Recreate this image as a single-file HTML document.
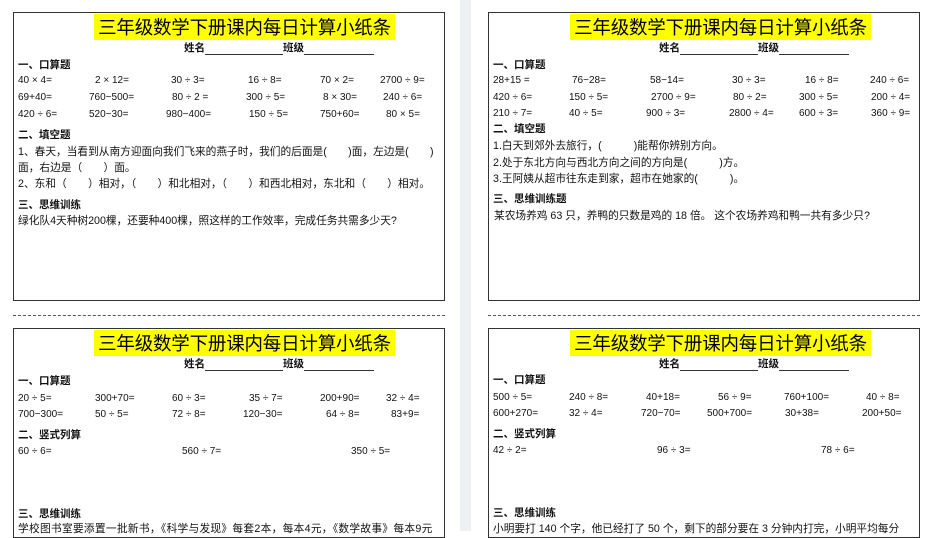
<!DOCTYPE html>
<html><head><meta charset="utf-8"><style>
*{margin:0;padding:0;box-sizing:border-box}
body{width:929px;height:531px;overflow:hidden;background:#fff;position:relative;font-family:"Liberation Sans","Noto Sans CJK SC",sans-serif;color:#111;font-size:10px}
.gap{position:absolute;left:460px;top:0;width:11px;height:531px;background:#eef0f4}
.box{position:absolute;border:1.5px solid #333;background:#fff}
.dash{position:absolute;height:0;border-top:1px dashed #555}
.t{position:absolute;white-space:nowrap;line-height:13px}
.c{font-size:10.7px}
.title{position:absolute;background:#ffff00;font-size:18.5px;line-height:26px;height:26px;width:301px;text-align:center;white-space:nowrap;font-family:"Noto Sans CJK SC",sans-serif;color:#000;letter-spacing:-0.2px}
.b{font-weight:bold;font-size:10.5px}
.u{display:inline-block;width:78px;border-bottom:1px solid #333;height:11px;vertical-align:bottom}
</style></head><body>
<div class="gap"></div>
<div class="box" style="left:13px;top:12px;width:432px;height:289px"></div>
<div class="box" style="left:488px;top:12px;width:432px;height:289px"></div>
<div class="box" style="left:13px;top:328px;width:432px;height:210px"></div>
<div class="box" style="left:488px;top:328px;width:432px;height:210px"></div>
<div class="dash" style="left:13px;top:315px;width:432px"></div>
<div class="dash" style="left:488px;top:315px;width:432px"></div>

<!-- TL -->
<div class="title" style="left:94px;top:14px">三年级数学下册课内每日计算小纸条</div>
<div class="t b" style="left:184px;top:42px">姓名<span class="u"></span>班级<span class="u" style="width:70px"></span></div>
<div class="t b" style="left:18px;top:59px">一、口算题</div>
<div class="t" style="left:18px;top:74px">40 × 4=</div><div class="t" style="left:95px;top:74px">2 × 12=</div><div class="t" style="left:171px;top:74px">30 ÷ 3=</div><div class="t" style="left:248px;top:74px">16 ÷ 8=</div><div class="t" style="left:320px;top:74px">70 × 2=</div><div class="t" style="left:380px;top:74px">2700 ÷ 9=</div>
<div class="t" style="left:18px;top:91px">69+40=</div><div class="t" style="left:89px;top:91px">760−500=</div><div class="t" style="left:172px;top:91px">80 ÷ 2 =</div><div class="t" style="left:246px;top:91px">300 ÷ 5=</div><div class="t" style="left:323px;top:91px">8 × 30=</div><div class="t" style="left:383px;top:91px">240 ÷ 6=</div>
<div class="t" style="left:18px;top:108px">420 ÷ 6=</div><div class="t" style="left:89px;top:108px">520−30=</div><div class="t" style="left:166px;top:108px">980−400=</div><div class="t" style="left:249px;top:108px">150 ÷ 5=</div><div class="t" style="left:320px;top:108px">750+60=</div><div class="t" style="left:386px;top:108px">80 × 5=</div>
<div class="t b" style="left:18px;top:129px">二、填空题</div>
<div class="t c" style="left:18px;top:146px">1、春天，当看到从南方迎面向我们飞来的燕子时，我们的后面是(　　)面，左边是(　　)</div>
<div class="t c" style="left:18px;top:162px">面，右边是（　　）面。</div>
<div class="t c" style="left:18px;top:178px">2、东和（　　）相对，（　　）和北相对，（　　）和西北相对，东北和（　　）相对。</div>
<div class="t b" style="left:18px;top:199px">三、思维训练</div>
<div class="t c" style="left:18px;top:215px">绿化队4天种树200棵，还要种400棵，照这样的工作效率，完成任务共需多少天?</div>

<!-- TR -->
<div class="title" style="left:570px;top:14px">三年级数学下册课内每日计算小纸条</div>
<div class="t b" style="left:659px;top:42px">姓名<span class="u"></span>班级<span class="u" style="width:70px"></span></div>
<div class="t b" style="left:493px;top:59px">一、口算题</div>
<div class="t" style="left:493px;top:74px">28+15 =</div><div class="t" style="left:572px;top:74px">76−28=</div><div class="t" style="left:650px;top:74px">58−14=</div><div class="t" style="left:732px;top:74px">30 ÷ 3=</div><div class="t" style="left:805px;top:74px">16 ÷ 8=</div><div class="t" style="left:870px;top:74px">240 ÷ 6=</div>
<div class="t" style="left:493px;top:91px">420 ÷ 6=</div><div class="t" style="left:569px;top:91px">150 ÷ 5=</div><div class="t" style="left:651px;top:91px">2700 ÷ 9=</div><div class="t" style="left:733px;top:91px">80 ÷ 2=</div><div class="t" style="left:799px;top:91px">300 ÷ 5=</div><div class="t" style="left:871px;top:91px">200 ÷ 4=</div>
<div class="t" style="left:493px;top:107px">210 ÷ 7=</div><div class="t" style="left:569px;top:107px">40 ÷ 5=</div><div class="t" style="left:646px;top:107px">900 ÷ 3=</div><div class="t" style="left:729px;top:107px">2800 ÷ 4=</div><div class="t" style="left:799px;top:107px">600 ÷ 3=</div><div class="t" style="left:871px;top:107px">360 ÷ 9=</div>
<div class="t b" style="left:493px;top:123px">二、填空题</div>
<div class="t c" style="left:493px;top:140px">1.白天到郊外去旅行，(　　　)能帮你辨别方向。</div>
<div class="t c" style="left:493px;top:157px">2.处于东北方向与西北方向之间的方向是(　　　)方。</div>
<div class="t c" style="left:493px;top:173px">3.王阿姨从超市往东走到家，超市在她家的(　　　)。</div>
<div class="t b" style="left:493px;top:193px">三、思维训练题</div>
<div class="t c" style="left:494px;top:210px">某农场养鸡 63 只，养鸭的只数是鸡的 18 倍。 这个农场养鸡和鸭一共有多少只?</div>

<!-- BL -->
<div class="title" style="left:94px;top:330px">三年级数学下册课内每日计算小纸条</div>
<div class="t b" style="left:184px;top:358px">姓名<span class="u"></span>班级<span class="u" style="width:70px"></span></div>
<div class="t b" style="left:18px;top:375px">一、口算题</div>
<div class="t" style="left:18px;top:392px">20 ÷ 5=</div><div class="t" style="left:95px;top:392px">300+70=</div><div class="t" style="left:172px;top:392px">60 ÷ 3=</div><div class="t" style="left:249px;top:392px">35 ÷ 7=</div><div class="t" style="left:320px;top:392px">200+90=</div><div class="t" style="left:386px;top:392px">32 ÷ 4=</div>
<div class="t" style="left:18px;top:408px">700−300=</div><div class="t" style="left:95px;top:408px">50 ÷ 5=</div><div class="t" style="left:172px;top:408px">72 ÷ 8=</div><div class="t" style="left:243px;top:408px">120−30=</div><div class="t" style="left:326px;top:408px">64 ÷ 8=</div><div class="t" style="left:391px;top:408px">83+9=</div>
<div class="t b" style="left:18px;top:429px">二、竖式列算</div>
<div class="t" style="left:18px;top:445px">60 ÷ 6=</div><div class="t" style="left:182px;top:445px">560 ÷ 7=</div><div class="t" style="left:351px;top:445px">350 ÷ 5=</div>
<div class="t b" style="left:18px;top:508px">三、思维训练</div>
<div class="t c" style="left:18px;top:523px;letter-spacing:0.3px">学校图书室要添置一批新书，《科学与发现》每套2本，每本4元，《数学故事》每本9元</div>

<!-- BR -->
<div class="title" style="left:570px;top:330px">三年级数学下册课内每日计算小纸条</div>
<div class="t b" style="left:659px;top:358px">姓名<span class="u"></span>班级<span class="u" style="width:70px"></span></div>
<div class="t b" style="left:493px;top:374px">一、口算题</div>
<div class="t" style="left:493px;top:391px">500 ÷ 5=</div><div class="t" style="left:569px;top:391px">240 ÷ 8=</div><div class="t" style="left:646px;top:391px">40+18=</div><div class="t" style="left:718px;top:391px">56 ÷ 9=</div><div class="t" style="left:784px;top:391px">760+100=</div><div class="t" style="left:866px;top:391px">40 ÷ 8=</div>
<div class="t" style="left:493px;top:407px">600+270=</div><div class="t" style="left:569px;top:407px">32 ÷ 4=</div><div class="t" style="left:641px;top:407px">720−70=</div><div class="t" style="left:707px;top:407px">500+700=</div><div class="t" style="left:785px;top:407px">30+38=</div><div class="t" style="left:862px;top:407px">200+50=</div>
<div class="t b" style="left:493px;top:428px">二、竖式列算</div>
<div class="t" style="left:493px;top:444px">42 ÷ 2=</div><div class="t" style="left:657px;top:444px">96 ÷ 3=</div><div class="t" style="left:821px;top:444px">78 ÷ 6=</div>
<div class="t b" style="left:493px;top:507px">三、思维训练</div>
<div class="t c" style="left:493px;top:523px">小明要打 140 个字，他已经打了 50 个，剩下的部分要在 3 分钟内打完，小明平均每分</div>
</body></html>
